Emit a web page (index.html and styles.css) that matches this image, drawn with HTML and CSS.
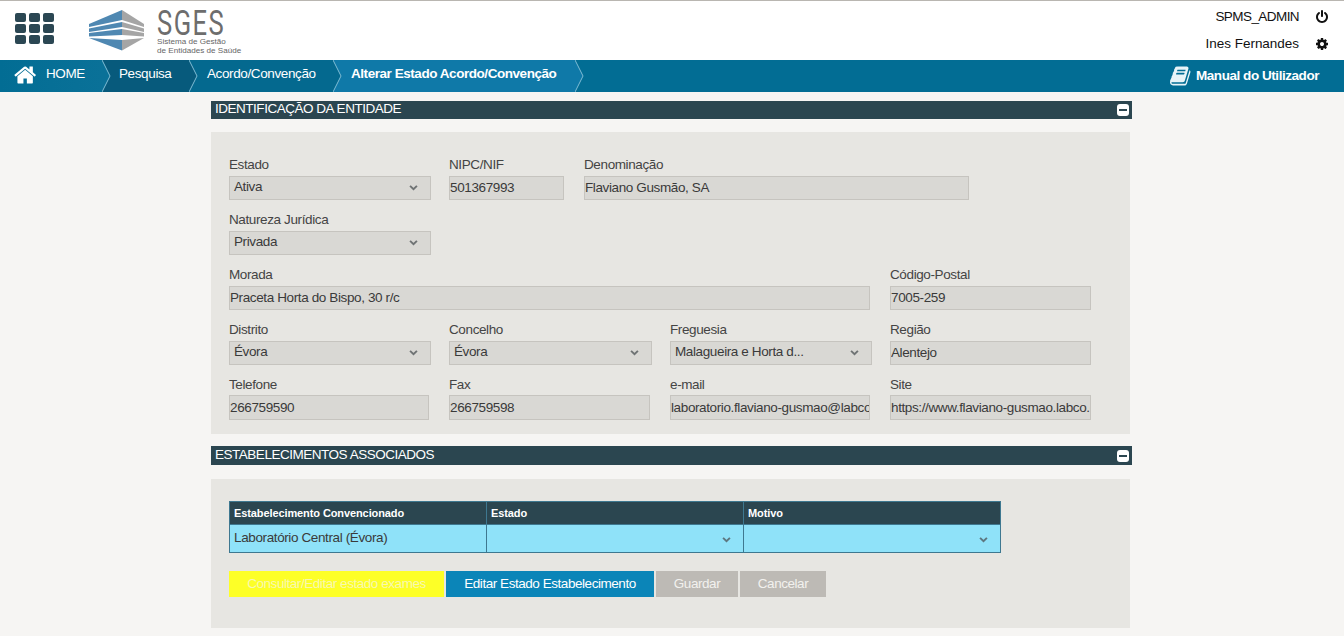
FILE: index.html
```html
<!DOCTYPE html>
<html lang="pt">
<head>
<meta charset="utf-8">
<title>SGES</title>
<link rel="stylesheet" href="styles.css">
</head>
<body>
<header class="top">
  <div class="apps" aria-label="Aplicações"><i></i><i></i><i></i><i></i><i></i><i></i><i></i><i></i><i></i></div>
  <div class="logo">
    <svg class="logo-mark" width="56" height="41" viewBox="0 0 56 41">
      <g fill="#4f88b2">
        <polygon points="0,14 33,0 33,10 0,17"/>
        <polygon points="0,18.5 33,12 33,17 0,22"/>
        <polygon points="0,23 33,19 33,25 0,26.5"/>
        <polygon points="0,28 33,30 33,40.500"/>
      </g>
      <g fill="#a5a5a5">
        <polygon points="33,0 55,14 55,17 33,10"/>
        <polygon points="33,12 55,18.5 55,22 33,17"/>
        <polygon points="33,19 55,23 55,26.500 33,25"/>
        <polygon points="33,30 55,28 33,40.500"/>
      </g>
    </svg>
    <div class="logo-text">
      <div class="logo-name"><span>SGES</span></div>
      <div class="logo-sub">Sistema de Gestão<br>de Entidades de Saúde</div>
    </div>
  </div>
  <div class="user">
    <div class="user-row"><span class="user-code">SPMS_ADMIN</span>
      <svg class="user-icon" viewBox="0 0 1792 1792"><path d="M1664 896q0 156-61 298t-164 245-245 164-298 61-298-61-245-164-164-245-61-298q0-182 80.5-343t226.5-270q43-32 95.5-25t83.5 50q32 42 24.5 94.5t-49.5 84.5q-98 74-151.5 181t-53.5 228q0 104 40.5 198.5t109.5 163.5 163.5 109.5 198.5 40.5 198.5-40.5 163.5-109.5 109.5-163.5 40.5-198.5q0-121-53.5-228t-151.5-181q-42-32-49.5-84.5t24.5-94.5q31-43 84-50t95 25q146 109 226.5 270t80.5 343zm-640-768v640q0 52-38 90t-90 38-90-38-38-90v-640q0-52 38-90t90-38 90 38 38 90z"/></svg>
    </div>
    <div class="user-row"><span class="user-name">Ines Fernandes</span>
      <svg class="user-icon" viewBox="0 0 1792 1792"><path d="M1152 896q0-106-75-181t-181-75-181 75-75 181 75 181 181 75 181-75 75-181zm512-109v222q0 12-8 23t-20 13l-185 28q-19 54-39 91 35 50 107 138 10 12 10 25t-9 23q-27 37-99 108t-94 71q-12 0-26-9l-138-108q-44 23-91 38-16 136-29 186-7 28-36 28h-222q-14 0-24.5-8.5t-11.5-21.5l-28-184q-49-16-90-37l-141 107q-10 9-25 9-14 0-25-11-126-114-165-168-7-10-7-23 0-12 8-23 15-21 51-66.5t54-70.5q-27-50-41-99l-183-27q-13-2-21-12.5t-8-23.5v-222q0-12 8-23t19-13l186-28q14-46 39-92-40-57-107-138-10-12-10-24 0-10 9-23 26-36 98.5-107.5t94.5-71.5q13 0 26 10l138 107q44-23 91-38 16-136 29-186 7-28 36-28h222q14 0 24.5 8.5t11.5 21.5l28 184q49 16 90 37l142-107q9-9 24-9 13 0 25 10 129 119 165 170 7 8 7 22 0 12-8 23-15 21-51 66.5t-54 70.5q26 50 41 98l183 28q13 2 21 12.5t8 23.5z"/></svg>
    </div>
  </div>
</header>

<nav class="nav">
  <a class="crumb crumb-home">
    <svg class="home-icon" viewBox="0 0 1792 1792"><path d="M1408 992v480q0 26-19 45t-45 19h-384v-384h-256v384h-384q-26 0-45-19t-19-45v-480q0-1 .5-3t.5-3l575-474 575 474q1 2 1 6zm223-69l-62 74q-8 9-21 11h-3q-13 0-21-7l-692-577-692 577q-12 8-24 7-13-2-21-11l-62-74q-8-10-7-23.5t11-21.5l719-599q32-26 76-26t76 26l244 204v-195q0-14 9-23t23-9h192q14 0 23 9t9 23v408l219 182q10 8 11 21.5t-7 23.5z"/></svg>
    <span>HOME</span>
    <svg class="tip" viewBox="0 0 10 32"><polygon class="tip-fill" points="0,0 8,16 0,32"/><polyline class="tip-line" points="0,0 8,16 0,32"/></svg>
  </a>
  <a class="crumb crumb-search">
    <span>Pesquisa</span>
    <svg class="tip" viewBox="0 0 10 32"><polygon class="tip-fill" points="0,0 8,16 0,32"/><polyline class="tip-line" points="0,0 8,16 0,32"/></svg>
  </a>
  <a class="crumb crumb-deal">
    <span>Acordo/Convenção</span>
    <svg class="tip" viewBox="0 0 10 32"><polygon class="tip-fill" points="0,0 8,16 0,32"/><polyline class="tip-line" points="0,0 8,16 0,32"/></svg>
  </a>
  <a class="crumb crumb-current">
    <span>Alterar Estado Acordo/Convenção</span>
    <svg class="tip" viewBox="0 0 10 32"><polygon class="tip-fill" points="0,0 8,16 0,32"/><polyline class="tip-line" points="0,0 8,16 0,32"/></svg>
  </a>
  <a class="manual">
    <svg class="book-icon" viewBox="0 0 1792 1792"><path d="M1639 478q40 57 18 129l-275 906q-19 64-76.5 107.5t-122.5 43.5h-923q-77 0-148.5-53.5t-99.5-131.5q-24-67-2-127 0-4 3-27t4-37q1-8-3-21.5t-3-19.5q2-11 8-21t16.5-23.5 16.5-23.5q23-38 45-91.5t30-91.5q3-10 .5-30t-.5-28q3-11 17-28t17-23q21-36 42-92t25-90q1-9-2.5-32t.5-28q4-13 22-30.5t22-22.5q19-26 42.5-84.5t27.5-96.5q1-8-3-25.5t-2-26.5q2-8 9-18t18-23 17-21q8-12 16.5-30.5t15-35 16-36 19.5-32 26.5-23.5 36-11.5 47.5 5.5l-1 3q38-9 51-9h761q74 0 114 56t18 130l-274 906q-36 119-71.5 153.5t-128.5 34.5h-869q-27 0-38 15-11 16-1 43 24 70 144 70h923q29 0 56-15.5t35-41.5l300-987q7-22 5-57 38 15 59 43zm-1064 2q-4 13 2 22.5t20 9.5h608q13 0 25.5-9.5t16.5-22.5l21-64q4-13-2-22.5t-20-9.5h-608q-13 0-25.5 9.5t-16.5 22.5zm-83 256q-4 13 2 22.5t20 9.5h608q13 0 25.5-9.5t16.5-22.5l21-64q4-13-2-22.5t-20-9.5h-608q-13 0-25.5 9.5t-16.5 22.5z"/></svg>
    <span>Manual do Utilizador</span>
  </a>
</nav>

<main class="content">
  <div class="bar"><span>IDENTIFICAÇÃO DA ENTIDADE</span><b class="collapse"></b></div>
  <section class="panel panel-entity">
    <div class="row">
      <label class="field w-202">Estado<div class="select"><span>Ativa</span><svg class="chev" viewBox="0 0 10 7"><polyline points="1,1 5,5 9,1"/></svg></div></label>
      <label class="field w-115">NIPC/NIF<input class="input" value="501367993" readonly></label>
      <label class="field w-385">Denominação<input class="input" value="Flaviano Gusmão, SA" readonly></label>
    </div>
    <div class="row">
      <label class="field w-202">Natureza Jurídica<div class="select"><span>Privada</span><svg class="chev" viewBox="0 0 10 7"><polyline points="1,1 5,5 9,1"/></svg></div></label>
    </div>
    <div class="row">
      <label class="field w-641">Morada<input class="input" value="Praceta Horta do Bispo, 30 r/c" readonly></label>
      <label class="field w-201">Código-Postal<input class="input" value="7005-259" readonly></label>
    </div>
    <div class="row">
      <label class="field w-202">Distrito<div class="select"><span>Évora</span><svg class="chev" viewBox="0 0 10 7"><polyline points="1,1 5,5 9,1"/></svg></div></label>
      <label class="field w-203">Concelho<div class="select"><span>Évora</span><svg class="chev" viewBox="0 0 10 7"><polyline points="1,1 5,5 9,1"/></svg></div></label>
      <label class="field w-202">Freguesia<div class="select"><span>Malagueira e Horta d...</span><svg class="chev" viewBox="0 0 10 7"><polyline points="1,1 5,5 9,1"/></svg></div></label>
      <label class="field w-201">Região<input class="input" value="Alentejo" readonly></label>
    </div>
    <div class="row row-last">
      <label class="field w-200">Telefone<input class="input" value="266759590" readonly></label>
      <label class="field w-201">Fax<input class="input" value="266759598" readonly></label>
      <label class="field w-200">e-mail<input class="input" value="laboratorio.flaviano-gusmao@labco.com" readonly></label>
      <label class="field w-201">Site<input class="input" value="https://www.flaviano-gusmao.labco.com" readonly></label>
    </div>
  </section>

  <div class="bar bar-second"><span>ESTABELECIMENTOS ASSOCIADOS</span><b class="collapse"></b></div>
  <section class="panel panel-assoc">
    <table class="grid">
      <thead>
        <tr><th>Estabelecimento Convencionado</th><th>Estado</th><th>Motivo</th></tr>
      </thead>
      <tbody>
        <tr>
          <td>Laboratório Central (Évora)</td>
          <td><svg class="chev chev-cell" viewBox="0 0 10 7"><polyline points="1,1 5,5 9,1"/></svg></td>
          <td><svg class="chev chev-cell" viewBox="0 0 10 7"><polyline points="1,1 5,5 9,1"/></svg></td>
        </tr>
      </tbody>
    </table>
    <div class="actions">
      <button class="btn btn-yellow">Consultar/Editar estado exames</button>
      <button class="btn btn-blue">Editar Estado Estabelecimento</button>
      <button class="btn btn-gray btn-save">Guardar</button>
      <button class="btn btn-gray btn-cancel">Cancelar</button>
    </div>
  </section>
</main>
</body>
</html>
```
FILE: styles.css
```css
* { box-sizing: border-box; }
html, body { margin: 0; height: 100%; }
body {
  background: #f6f5f3;
  font-family: "Liberation Sans", Arial, sans-serif;
  font-size: 13.5px;
  letter-spacing: -.38px;
  color: #333;
  overflow: hidden;
}

/* header */
.top {
  height: 60px;
  background: #fff;
  border-top: 1px solid #b9b6b1;
  display: flex;
  align-items: flex-start;
}
.apps {
  width: 39px;
  margin: 12px 0 0 15px;
  display: grid;
  grid-template-columns: repeat(3, 11px);
  grid-auto-rows: 9px;
  gap: 2px 3px;
}
.apps i { background: #2b4753; border-radius: 2px; }
.logo { display: flex; margin: 8px 0 0 35px; }
.logo-mark { margin-top: 1px; }
.logo-text { margin-left: 12px; }
.logo-name {
  height: 28px;
  width: 68px;
  font-family: Roboto, sans-serif;
  font-weight: 400;
  font-size: 24px;
  line-height: 28px;
  letter-spacing: 1.37px;
  color: #6d6d6d;
}
.logo-name span { display: inline-block; transform: scale(1.065, 1.46); transform-origin: 0 50%; }
.logo-sub { font-size: 8.1px; line-height: 9px; letter-spacing: 0; color: #666; white-space: nowrap; }
.user { margin-left: auto; margin-right: 15px; color: #111; }
.user-row { display: flex; justify-content: flex-end; align-items: center; height: 27px; gap: 16px; }
.user-row:first-child { margin-top: 2px; }
.user-code { letter-spacing: -.57px; }
.user-name { letter-spacing: -.03px; }
.user-icon { width: 14px; height: 14px; fill: #111; }

/* nav */
.nav {
  height: 32px;
  background: #026d94;
  display: flex;
  color: #fff;
  line-height: 28px;
  white-space: nowrap;
}
.crumb { position: relative; display: flex; height: 32px; padding-left: 18px; }
.crumb-home { width: 102px; padding-left: 46px; background: linear-gradient(90deg, #026d94, #0a7198); }
.crumb-search { width: 87px; padding-left: 17px; background: #075a7c; }
.crumb-deal { width: 144px; background: #04698f; }
.crumb-current { width: 242px; background: #0f79a8; font-weight: bold; letter-spacing: -.45px; }
.home-icon { position: absolute; left: 14px; top: 3px; width: 24px; height: 24px; fill: #fff; }
.tip { position: absolute; left: 100%; top: 0; width: 10px; height: 32px; z-index: 1; }
.tip-line { fill: none; stroke: #7fbcd4; stroke-width: 1; }
.crumb-home .tip-fill { fill: #0a7198; }
.crumb-search .tip-fill { fill: #075a7c; }
.crumb-deal .tip-fill { fill: #04698f; }
.crumb-current .tip-fill { fill: #0f79a8; }
.manual { margin-left: auto; margin-right: 25px; display: flex; align-items: center; font-weight: bold; letter-spacing: -.45px; }
.book-icon { width: 22px; height: 22px; fill: #e8f4f8; margin-right: 4px; }

/* content */
.content { width: 921px; margin-left: 211px; }
.bar {
  height: 18px;
  margin-top: 9px;
  background: #2b4650;
  color: #fff;
  padding: 0 3px 0 4px;
  display: flex;
  align-items: center;
  justify-content: space-between;
  letter-spacing: -.48px;
  line-height: 16px;
}
.bar span { margin-bottom: 2px; }
.bar-second { height: 19px; margin-top: 12px; }
.collapse {
  width: 12px;
  height: 12px;
  background: #fff;
  border-radius: 3px;
  position: relative;
}
.collapse::after {
  content: "";
  position: absolute;
  left: 2px; right: 2px; top: 5px;
  height: 2px;
  background: #2b4650;
}
.panel { width: 919px; background: #e7e6e2; margin-top: 13px; }
.panel-entity { height: 302px; padding: 23px 18px 0; }
.panel-assoc { margin-top: 14px; height: 149px; padding: 22px 18px 0; }

.row { display: flex; gap: 20px; height: 55px; }
.field { display: block; line-height: 19px; color: #444; flex: none; }
.w-115 { width: 115px; }
.w-200 { width: 200px; }
.w-201 { width: 201px; }
.w-202 { width: 202px; }
.w-203 { width: 203px; }
.w-385 { width: 385px; }
.w-641 { width: 641px; }
.row > .w-202:first-child + .w-115 { margin-left: -2px; }
.row > .w-202:first-child + .w-203 { margin-left: -2px; }
.row > .w-203 + .w-202 { margin-left: -2px; }
.row > .w-202 + .w-201 { margin-left: -2px; }
.input, .select {
  display: flex;
  width: 100%;
  height: 24px;
  margin-top: 2px;
  border: 1px solid #c6c4bf;
  background: #d9d8d4;
  color: #3a3a3a;
  font: inherit;
  letter-spacing: inherit;
  align-items: center;
  justify-content: space-between;
}
.row-last .input { height: 25px; margin-top: 1px; }
.input { padding: 0 0 1px; outline: none; }
.select { padding: 0 12px 3px 4px; }
.select .chev { margin-top: 2px; }
.chev { width: 9px; height: 6px; fill: none; stroke: #6f7374; stroke-width: 2.2; }

/* table */
.grid {
  width: 772px;
  border-collapse: collapse;
  table-layout: fixed;
  background: #8fe2f9;
}
.grid th, .grid td { border: 1px solid #3e7890; }
.grid th {
  height: 23px;
  background: #2b4650;
  color: #fff;
  font-size: 11px;
  letter-spacing: -.1px;
  text-align: left;
  padding: 0 4px;
}
.grid td { height: 28px; padding: 0 4px 3px; color: #3a3a3a; position: relative; }
.chev-cell { position: absolute; right: 12px; top: 12px; stroke: #5d7780; }

/* buttons */
.actions { display: flex; gap: 2px; margin-top: 18px; }
.btn {
  height: 26px;
  border: 0;
  padding: 0 0 2px;
  font: inherit;
  letter-spacing: -.45px;
  color: #fff;
}
.btn-yellow { width: 215px; background: #fdff27; color: #f8f8b0; }
.btn-blue { width: 208px; background: #0b85b8; }
.btn-gray { background: #bdbab5; color: #f2f1ee; }
.btn-save { width: 82px; }
.btn-cancel { width: 86px; }
```
